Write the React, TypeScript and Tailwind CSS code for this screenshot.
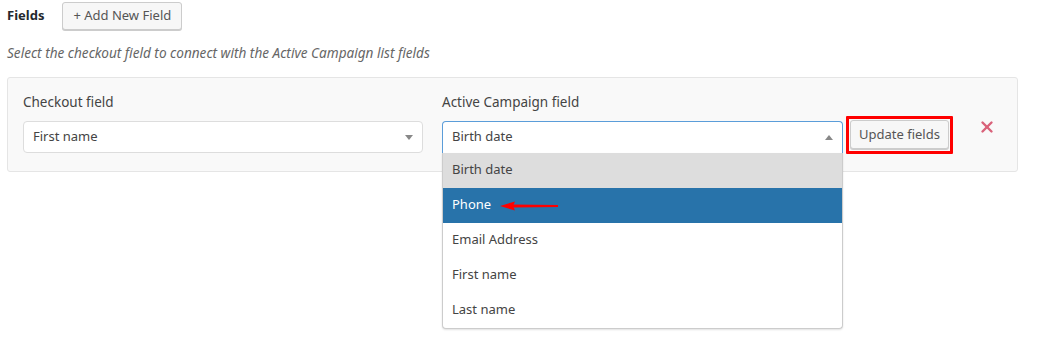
import { X } from "lucide-react";

const options = ["Birth date", "Phone", "Email Address", "First name", "Last name"];

function Caret({ up }: { up?: boolean }) {
  return (
    <svg width="8" height="5" viewBox="0 0 8 5" className="absolute right-[9px] top-[13px]">
      <path d={up ? "M0 5 L4 0 L8 5 Z" : "M0 0 L8 0 L4 5 Z"} fill="#888" />
    </svg>
  );
}

export default function App() {
  return (
    <div className="h-[344px] w-[1038px] bg-white text-[#444] font-['Noto_Sans',sans-serif]">
      <div className="flex items-center gap-[18px] pl-[7px] pt-[2px]">
        <span className="text-[13px] font-bold text-[#23282d]">Fields</span>
        <button
          type="button"
          className="h-[28px] rounded-[3px] border border-[#ccc] bg-[#f7f7f7] px-[10px] text-[13px] text-[#555] shadow-[0_1px_0_#ccc]"
        >
          + Add New Field
        </button>
      </div>
      <p className="mt-[13px] pl-[7px] text-[13.6px] italic text-[#666]">
        Select the checkout field to connect with the Active Campaign list fields
      </p>
      <div className="ml-[7px] mt-[14px] h-[95px] w-[1011px] rounded-[3px] border border-[#e5e5e5] bg-[#f9f9f9] pl-[15px] pt-[14px]">
        <div className="flex">
          <div className="w-[400px]">
            <div className="text-[13.5px] text-[#444]">Checkout field</div>
            <div className="relative mt-[8px] flex h-[32px] w-[400px] items-center rounded-[4px] border border-[#ddd] bg-white pl-[9px] text-[13px] text-[#444]">
              First name
              <Caret />
            </div>
          </div>
          <div className="ml-[19px] w-[401px]">
            <div className="text-[13.5px] text-[#444]">Active Campaign field</div>
            <div className="relative mt-[8px] w-[401px]">
              <div className="relative flex h-[32px] items-center rounded-t-[4px] border border-[#5b9dd9] border-b-0 bg-white pl-[9px] text-[13px] text-[#444]">
                Birth date
                <Caret up />
              </div>
              <div className="absolute left-0 top-[32px] z-10 w-[401px] rounded-b-[4px] border border-t-0 border-[#ccc] bg-white text-[13px] shadow-[0_1px_2px_rgba(0,0,0,0.12)]">
                {options.map((o) => (
                  <div
                    key={o}
                    className={
                      "relative flex h-[35px] items-center pl-[9px] " +
                      (o === "Birth date"
                        ? "bg-[#ddd] text-[#444]"
                        : o === "Phone"
                        ? "bg-[#2873aa] text-white"
                        : "text-[#444]")
                    }
                  >
                    {o}
                    {o === "Phone" && (
                      <svg width="60" height="10" viewBox="0 0 60 10" className="absolute left-[57px] top-[13px]">
                        <path d="M12 3.5 L58 4 L58 6 L12 6.5 Z" fill="#f00" />
                        <path d="M0 5 L15 0.5 L13 5 L15 9.5 Z" fill="#f00" />
                      </svg>
                    )}
                  </div>
                ))}
              </div>
            </div>
          </div>
          <div className="ml-[3px] mt-[24px] h-[38px] rounded-[1px] border-[3px] border-[#f00] p-[1px]">
            <button
              type="button"
              className="h-[29px] rounded-[3px] border border-[#ccc] bg-[#f7f7f7] px-[8px] text-[13px] text-[#555] shadow-[0_1px_0_#ccc]"
            >
              Update fields
            </button>
          </div>
          <div className="ml-[25px] mt-[26px]">
            <X size={18} strokeWidth={3.2} color="#d9627a" />
          </div>
        </div>
      </div>
    </div>
  );
}
